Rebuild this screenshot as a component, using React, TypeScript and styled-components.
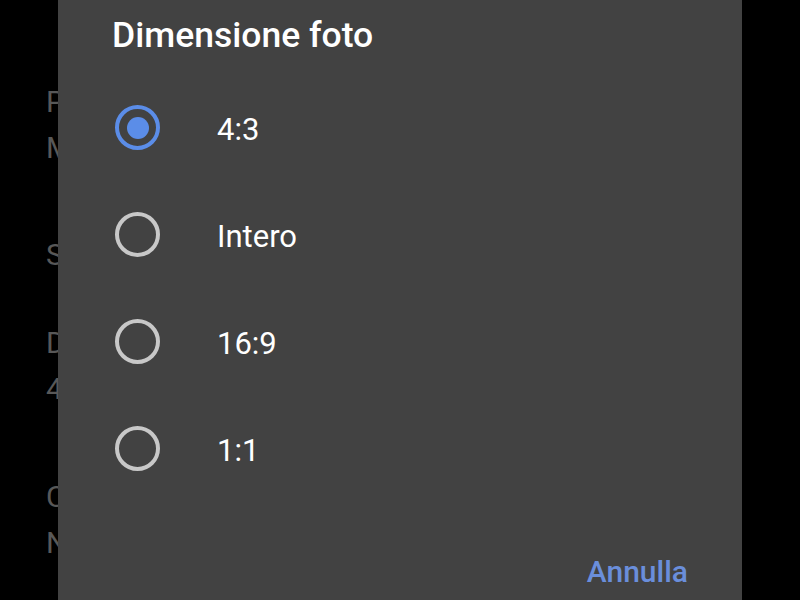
import styled, { createGlobalStyle } from 'styled-components';

const GlobalStyle = createGlobalStyle`
  html, body {
    margin: 0;
    padding: 0;
    background: #000;
    overflow: hidden;
  }
  body {
    font-family: Roboto, "Noto Sans", "Liberation Sans", sans-serif;
  }
`;

const Screen = styled.div`
  position: relative;
  width: 800px;
  height: 600px;
  background: #000;
  overflow: hidden;
`;

// settings page under the scrim, only its left edge shows past the dialog
const SettingsList = styled.div`
  display: flex;
  flex-direction: column;
  width: 12px;
  margin-left: 46px;
  padding-top: 79px;
  overflow: hidden;
`;

const SettingGroup = styled.div<{ $gap: number }>`
  display: flex;
  flex-direction: column;
  margin-top: ${({ $gap }) => $gap}px;
`;

const SettingLine = styled.div`
  height: 46px;
  line-height: 46px;
  font-size: 30px;
  color: #585858;
  white-space: nowrap;
  overflow: hidden;
  text-overflow: clip;
`;

const Dialog = styled.div`
  position: absolute;
  left: 58px;
  top: -8px;
  bottom: -8px;
  width: 684px;
  background: #424242;
  border-radius: 4px;
  display: flex;
  flex-direction: column;
  padding-top: 23px;
  box-sizing: border-box;
`;

const Title = styled.h2`
  margin: 0;
  padding-left: 54px;
  height: 40px;
  line-height: 40px;
  font-size: 35.5px;
  font-weight: 500;
  color: #fff;
`;

const Options = styled.div`
  display: flex;
  flex-direction: column;
  margin-top: 19px;
`;

const OptionRow = styled.label`
  display: flex;
  align-items: center;
  height: 107px;
  padding-left: 57px;
  gap: 57px;
`;

const Radio = styled.span<{ $checked: boolean }>`
  width: 45px;
  height: 45px;
  box-sizing: border-box;
  border-radius: 50%;
  border: 4px solid ${({ $checked }) => ($checked ? '#5b8de8' : '#c8c8c8')};
  display: flex;
  align-items: center;
  justify-content: center;
  flex-shrink: 0;

  &::after {
    content: '';
    width: 22px;
    height: 22px;
    border-radius: 50%;
    background: #5b8de8;
    display: ${({ $checked }) => ($checked ? 'block' : 'none')};
  }
`;

const OptionLabel = styled.span`
  font-size: 31px;
  color: #fff;
  line-height: 36px;
  padding-top: 4px;
`;

const Footer = styled.div`
  display: flex;
  justify-content: flex-end;
  margin-top: 52px;
  padding-right: 54px;
`;

const TextButton = styled.button`
  background: none;
  border: none;
  padding: 0;
  font-family: inherit;
  font-size: 30px;
  font-weight: 500;
  line-height: 36px;
  color: #6a8edb;
`;

const settings = [
  { gap: 0, lines: ['Posizione', 'Memorizza posizione'] },
  { gap: 61, lines: ['Scatto'] },
  { gap: 42, lines: ['Dimensione foto', '4:3'] },
  { gap: 62, lines: ['Composizione', 'Nessuna'] },
];

const options = ['4:3', 'Intero', '16:9', '1:1'];

export default function App() {
  const selected = '4:3';

  return (
    <>
      <GlobalStyle />
      <Screen>
        <SettingsList>
          {settings.map((group, i) => (
            <SettingGroup key={i} $gap={group.gap}>
              {group.lines.map((line) => (
                <SettingLine key={line}>{line}</SettingLine>
              ))}
            </SettingGroup>
          ))}
        </SettingsList>

        <Dialog>
          <Title>Dimensione foto</Title>
          <Options>
            {options.map((opt) => (
              <OptionRow key={opt}>
                <Radio $checked={opt === selected} />
                <OptionLabel>{opt}</OptionLabel>
              </OptionRow>
            ))}
          </Options>
          <Footer>
            <TextButton>Annulla</TextButton>
          </Footer>
        </Dialog>
      </Screen>
    </>
  );
}
